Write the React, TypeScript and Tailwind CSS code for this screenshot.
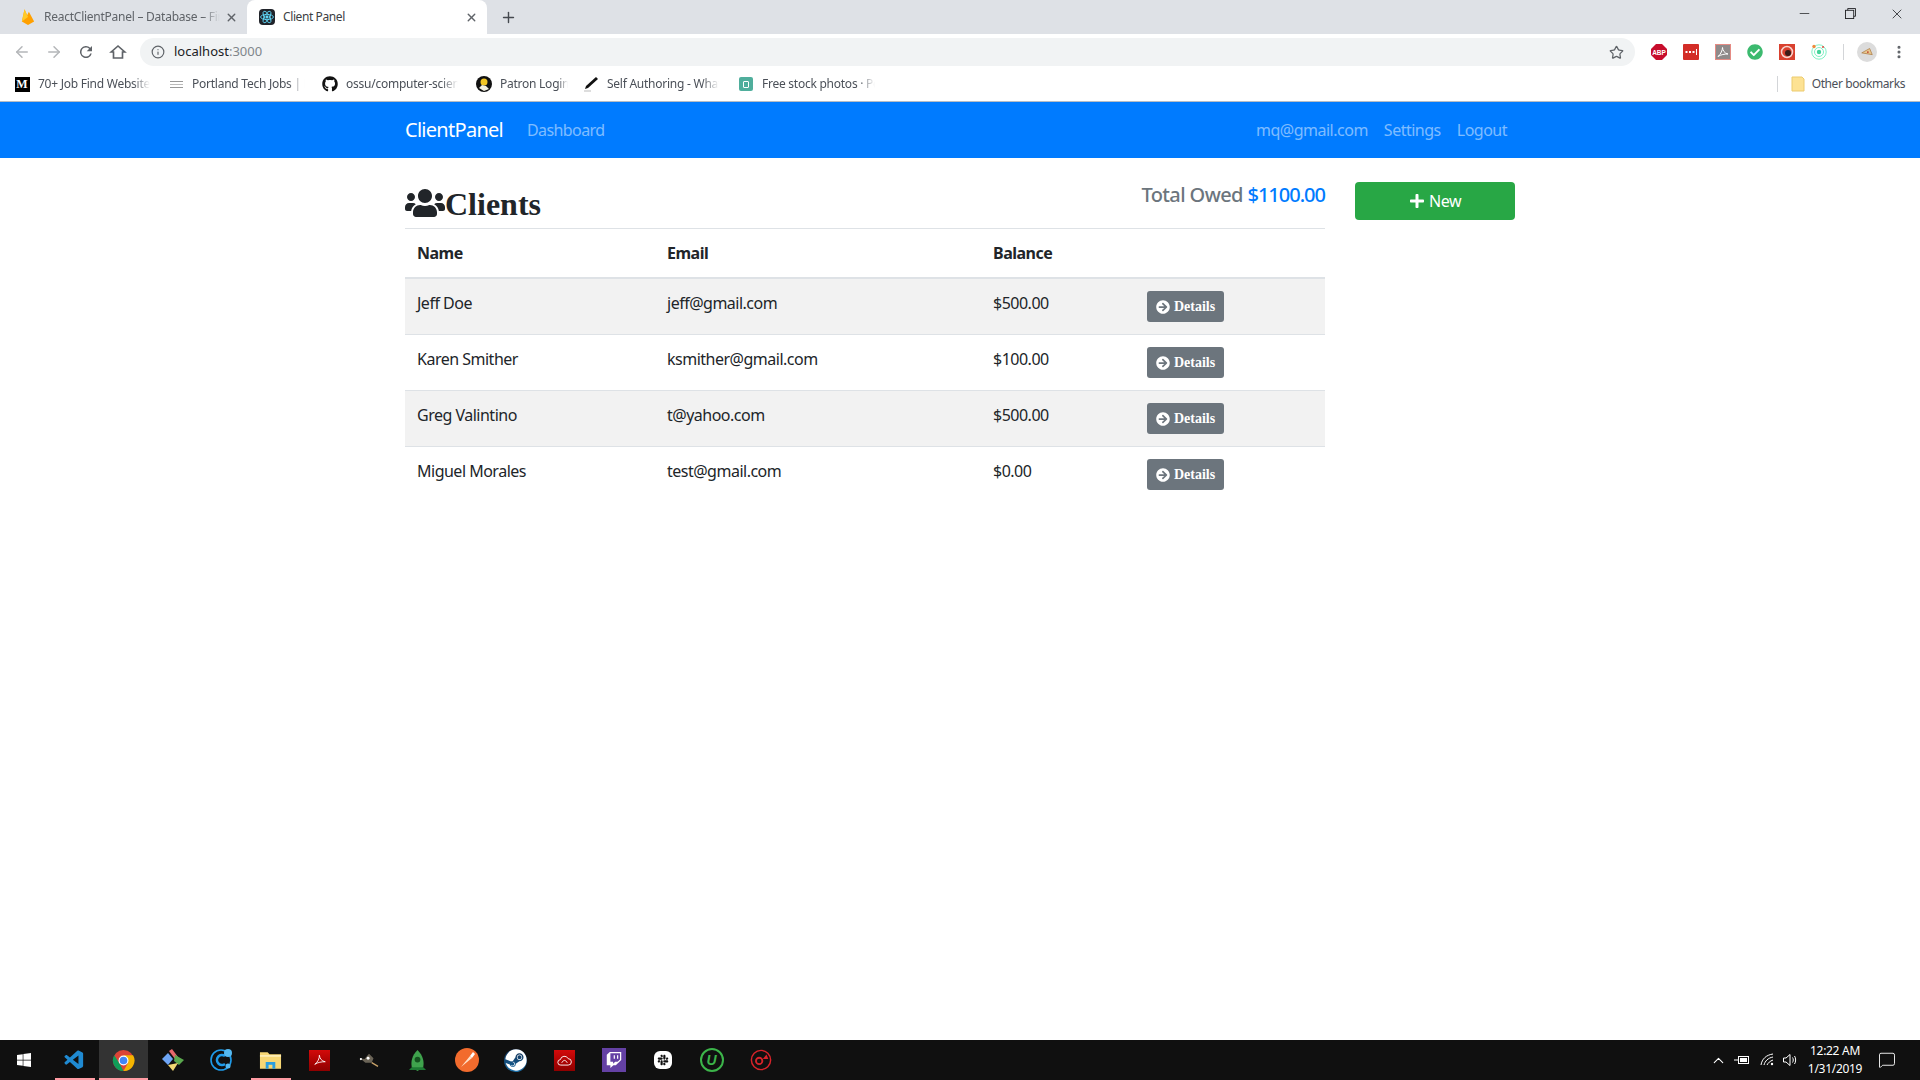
import { ArrowLeft, ArrowRight, Info, Star, X, Plus, Minus, MoreVertical, ChevronUp, MessageSquare } from 'lucide-react';
import { FaUsers, FaPlus, FaArrowCircleRight, FaGithub, FaWindows, FaSteam, FaTwitch, FaSlack, FaCheckCircle } from 'react-icons/fa';
import { VscVscode } from 'react-icons/vsc';

const clients = [
    { name: 'Jeff Doe', email: 'jeff@gmail.com', balance: '$500.00' },
    { name: 'Karen Smither', email: 'ksmither@gmail.com', balance: '$100.00' },
    { name: 'Greg Valintino', email: 't@yahoo.com', balance: '$500.00' },
    { name: 'Miguel Morales', email: 'test@gmail.com', balance: '$0.00' },
];

function Bookmark({ icon, label, width, margin }: { icon: React.ReactNode; label: string; width: string; margin: string }) {
    return (
        <div className={`flex items-center gap-[8px] ${margin}`}>
            <div className="w-4 h-4 flex items-center justify-center shrink-0">{icon}</div>
            <span className={`${width} overflow-hidden whitespace-nowrap text-[12px] tracking-[-0.25px] text-[#4b5058] [mask-image:linear-gradient(to_right,black_85%,transparent)]`}>
                {label}
            </span>
        </div>
    );
}

function ChromeBar() {
    return (
        <div className="font-['Noto_Sans',sans-serif] shrink-0">
            {/* tabs */}
            <div className="h-[34px] bg-[#dee1e6] flex items-end relative">
                <div className="w-[247px] h-[34px] flex items-center pl-[21px] pr-[9px]">
                    <svg viewBox="0 0 16 20" className="w-[14px] h-[18px] shrink-0">
                        <path d="M1 15 L4 1 L7 8 L9 4 L15 15 L8 19Z" fill="#ffa000" />
                        <path d="M1 15 L4 1 L8 10Z" fill="#ffca28" />
                    </svg>
                    <span className="ml-[9px] w-[176px] overflow-hidden whitespace-nowrap text-[12px] tracking-[-0.25px] text-[#5f6368] [mask-image:linear-gradient(to_right,black_90%,transparent)]">
                        ReactClientPanel – Database – Fir
                    </span>
                    <X size={13} strokeWidth={2.5} className="ml-auto text-[#5f6368]" />
                </div>
                <div className="w-[240px] h-[34px] bg-white rounded-t-lg flex items-center pl-[12px] pr-[9px]">
                    <div className="w-4 h-4 bg-[#20232a] rounded-sm flex items-center justify-center shrink-0">
                        <svg viewBox="0 0 24 24" className="w-[14px] h-[14px]" fill="none" stroke="#61dafb" strokeWidth="1.5">
                            <circle cx="12" cy="12" r="2" fill="#61dafb" />
                            <ellipse cx="12" cy="12" rx="11" ry="4.5" />
                            <ellipse cx="12" cy="12" rx="11" ry="4.5" transform="rotate(60 12 12)" />
                            <ellipse cx="12" cy="12" rx="11" ry="4.5" transform="rotate(120 12 12)" />
                        </svg>
                    </div>
                    <span className="ml-[8px] text-[12px] tracking-[-0.4px] text-[#3c4043]">Client Panel</span>
                    <X size={13} strokeWidth={2.5} className="ml-auto text-[#5f6368]" />
                </div>
                <Plus size={17} strokeWidth={2} className="ml-[13px] mb-[8px] text-[#45494f]" />
                <div className="ml-auto h-[34px] flex items-start pr-[15px] pt-[6px] gap-[33px] text-[#202124]">
                    <Minus size={15} strokeWidth={1.2} />
                    <svg viewBox="0 0 12 12" className="w-[11px] h-[11px] mt-[2px]" fill="none" stroke="currentColor" strokeWidth="1">
                        <rect x="0.5" y="2.5" width="9" height="9" />
                        <path d="M3 2.5V0.5H11.5V9H9.5" />
                    </svg>
                    <X size={16} strokeWidth={1.2} />
                </div>
            </div>
            {/* address bar */}
            <div className="h-[36px] bg-white flex items-center">
                <div className="flex items-center pl-[13px] w-[140px]">
                    <ArrowLeft size={18} strokeWidth={2} className="text-[#b4b6b9]" />
                    <ArrowRight size={18} strokeWidth={2} className="ml-[14px] text-[#b4b6b9]" />
                    <svg viewBox="0 0 24 24" className="ml-[14px] w-[18px] h-[18px] text-[#5f6368]" fill="currentColor">
                        <path d="M17.65 6.35A8 8 0 1 0 19.73 14h-2.08A6 6 0 1 1 12 6c1.66 0 3.14.69 4.22 1.78L13 11h7V4z" />
                    </svg>
                    <svg viewBox="0 0 24 24" className="ml-[14px] w-[18px] h-[18px] text-[#5f6368]" fill="none" stroke="currentColor" strokeWidth="2.2">
                        <path d="M12 4L3 12H6V20H18V12H21Z" strokeLinejoin="miter" />
                    </svg>
                </div>
                <div className="w-[1495px] h-[28px] bg-[#f1f3f4] rounded-full flex items-center pl-[11px] pr-[11px]">
                    <Info size={14} strokeWidth={2} className="text-[#5f6368]" />
                    <span className="ml-[9px] text-[13px] text-[#202124]">
                        localhost<span className="text-[#80868b]">:3000</span>
                    </span>
                    <Star size={15} strokeWidth={2} className="ml-auto text-[#5f6368]" />
                </div>
                <div className="flex items-center pl-[16px] gap-[16px]">
                    <svg viewBox="0 0 16 16" className="w-4 h-4">
                        <path d="M5 0H11L16 5V11L11 16H5L0 11V5Z" fill="#c70d2c" />
                        <text x="8" y="10.5" fontSize="6.5" fontWeight="700" fill="white" textAnchor="middle" fontFamily="Liberation Sans">ABP</text>
                    </svg>
                    <svg viewBox="0 0 16 16" className="w-4 h-4">
                        <rect width="16" height="16" rx="1" fill="#d32d27" />
                        <path d="M2.5 7h2v2h-2zM6 7h2v2H6zM9.5 7h2v2h-2z" fill="white" />
                        <rect x="13" y="5" width="1" height="6" fill="white" />
                    </svg>
                    <svg viewBox="0 0 16 16" className="w-4 h-4">
                        <rect x="0.5" y="0.5" width="15" height="15" fill="#8f8a8a" stroke="#e58b84" />
                        <path d="M3 12.5C6 10 7.5 6 7.5 3.5C7.5 6 9.5 9.5 13 10C9.5 10 6 10.5 3 12.5Z" fill="none" stroke="white" strokeWidth="1" />
                    </svg>
                    <FaCheckCircle size={16} className="text-[#3cba6f]" />
                    <svg viewBox="0 0 16 16" className="w-4 h-4">
                        <rect width="16" height="16" fill="#d9412f" />
                        <circle cx="8" cy="8" r="5.5" fill="none" stroke="#f6d5cf" strokeWidth="1.5" />
                        <circle cx="9" cy="9" r="3" fill="#3a1c18" />
                    </svg>
                    <svg viewBox="0 0 16 16" className="w-4 h-4" fill="none">
                        <circle cx="8" cy="8" r="7.2" stroke="#7ff0c4" strokeWidth="1" />
                        <circle cx="8" cy="8" r="4.5" stroke="#7ff0c4" strokeWidth="1" />
                        <circle cx="8" cy="8" r="2.2" fill="#43d39a" />
                        <circle cx="3" cy="2.5" r="1.7" fill="#f08a3c" />
                        <circle cx="12" cy="3" r="1" fill="#e2483d" />
                    </svg>
                    <div className="w-px h-[16px] bg-[#d3d5d8]" />
                    <div className="ml-[-3px] w-5 h-5 rounded-full bg-[#dcdcdc] flex items-center justify-center">
                        <svg viewBox="0 0 16 16" className="w-[14px] h-[14px]">
                            <path d="M2 9L11 4L14 11Z" fill="#e9c98f" stroke="#a8763e" strokeWidth="0.8" />
                            <circle cx="9" cy="8" r="1" fill="#c0392b" />
                        </svg>
                    </div>
                    <MoreVertical size={16} strokeWidth={2.6} className="ml-[-2px] text-[#5f6368]" />
                </div>
            </div>
            {/* bookmarks */}
            <div className="h-[32px] bg-white flex items-center pl-[14px] pb-[3px] border-b border-[#b6bcc4]">
                <Bookmark
                    width="w-[112px]"
                    margin=""
                    label="70+ Job Find Website"
                    icon={<div className="w-[15px] h-[15px] bg-black text-white text-[12px] leading-[15px] text-center font-bold font-['Liberation_Serif',serif]">M</div>}
                />
                <Bookmark
                    width="w-[113px]"
                    margin="ml-[18px]"
                    label="Portland Tech Jobs | P"
                    icon={<div className="w-[13px] flex flex-col gap-[2px]"><div className="h-px bg-[#999]" /><div className="h-px bg-[#bbb]" /><div className="h-px bg-[#999]" /></div>}
                />
                <Bookmark width="w-[112px]" margin="ml-[17px]" label="ossu/computer-scien" icon={<FaGithub size={16} className="text-[#111]" />} />
                <Bookmark
                    width="w-[68px]"
                    margin="ml-[18px]"
                    label="Patron Login"
                    icon={
                        <svg viewBox="0 0 16 16" className="w-4 h-4">
                            <circle cx="8" cy="8" r="8" fill="#111" />
                            <circle cx="8" cy="6" r="3.5" fill="#f3c623" />
                            <path d="M3 12l3-3 4 1 3 3-5 2z" fill="#f3f0e0" />
                        </svg>
                    }
                />
                <Bookmark
                    width="w-[112px]"
                    margin="ml-[15px]"
                    label="Self Authoring - What"
                    icon={
                        <svg viewBox="0 0 16 16" className="w-4 h-4">
                            <path d="M13 1L15 3L5 12L2 13L3 10Z" fill="#111" />
                            <path d="M1 15H8" stroke="#bbb" strokeWidth="1" />
                        </svg>
                    }
                />
                <Bookmark
                    width="w-[113px]"
                    margin="ml-[19px]"
                    label="Free stock photos · Pe"
                    icon={
                        <div className="w-[14px] h-[14px] bg-[#4fae9c] rounded-[2px] flex items-center justify-center">
                            <div className="w-[6px] h-[7px] border border-white rounded-[1px]" />
                        </div>
                    }
                />
                <div className="ml-auto flex items-center pr-[15px]">
                    <div className="w-px h-[16px] bg-[#d3d5d8] mr-[13px]" />
                    <svg viewBox="0 0 14 16" className="w-[14px] h-[16px] mr-[7px]">
                        <path d="M1 1H11L13 3V15H1Z" fill="#fde293" stroke="#eccb6f" />
                    </svg>
                    <span className="text-[12px] tracking-[-0.4px] text-[#4b5058]">Other bookmarks</span>
                </div>
            </div>
        </div>
    );
}

function Navbar() {
    return (
        <nav className="h-[56px] bg-[#007bff] shrink-0 font-['Noto_Sans',sans-serif]">
            <div className="w-[1110px] mx-auto h-full flex items-center">
                <span className="text-[20px] text-white mr-[16px] tracking-[-0.72px]">ClientPanel</span>
                <span className="px-2 text-[16px] text-white/50 tracking-[-0.6px]">Dashboard</span>
                <div className="ml-auto flex items-center text-[16px] text-white/50 tracking-[-0.5px]">
                    <span className="px-2">mq@gmail.com</span>
                    <span className="px-2">Settings</span>
                    <span className="px-2">Logout</span>
                </div>
            </div>
        </nav>
    );
}

function ClientsTable() {
    return (
        <table className="w-full table-fixed border-collapse text-[16px] text-[#212529] tracking-[-0.5px]">
            <colgroup>
                <col className="w-[250px]" />
                <col className="w-[326px]" />
                <col className="w-[154px]" />
                <col />
            </colgroup>
            <thead>
                <tr className="border-t border-[#dee2e6] border-b-2 border-b-[#dee2e6]">
                    <th className="p-3 h-[48px] text-left font-bold leading-6">Name</th>
                    <th className="p-3 text-left font-bold leading-6">Email</th>
                    <th className="p-3 text-left font-bold leading-6">Balance</th>
                    <th className="p-3" />
                </tr>
            </thead>
            <tbody>
                {clients.map((client, i) => (
                    <tr key={client.email} className={`border-b border-[#dee2e6] last:border-b-0 ${i % 2 === 0 ? 'bg-[#f2f2f2]' : ''}`}>
                        <td className="p-3 align-top leading-6">{client.name}</td>
                        <td className="p-3 align-top leading-6">{client.email}</td>
                        <td className="p-3 align-top leading-6">{client.balance}</td>
                        <td className="p-3 align-top">
                            <button className="h-[31px] w-[77px] bg-[#6c757d] rounded-[3px] text-white text-[14px] tracking-normal font-bold font-['Liberation_Serif',serif] flex items-center justify-center gap-[4px]">
                                <FaArrowCircleRight size={14} />
                                Details
                            </button>
                        </td>
                    </tr>
                ))}
            </tbody>
        </table>
    );
}

function Taskbar() {
    return (
        <div className="h-[40px] bg-[#101010] shrink-0 flex items-center text-white font-['Noto_Sans',sans-serif]">
            <div className="w-[50px] h-full flex items-center justify-center pr-[2px]">
                <FaWindows size={16} />
            </div>
            <TaskItem underline="w-[40px]">
                <VscVscode size={23} className="text-[#1f8ad2]" />
            </TaskItem>
            <TaskItem underline="w-full" active>
                <svg viewBox="0 0 24 24" className="w-[23px] h-[23px]">
                    <circle cx="12" cy="12" r="11" fill="#db4437" />
                    <path d="M12 23A11 11 0 0 1 2.4 6.5L8 15.5Z" fill="#0f9d58" />
                    <path d="M12 6.5H22A11 11 0 0 1 12 23L17 14Z" fill="#f4b400" />
                    <circle cx="12" cy="12" r="5.2" fill="white" />
                    <circle cx="12" cy="12" r="4" fill="#4285f4" />
                </svg>
            </TaskItem>
            <TaskItem>
                <svg viewBox="0 0 24 24" className="w-[24px] h-[24px]">
                    <path d="M1 11L7 5L12 11L7 17Z" fill="#6ea5f5" />
                    <path d="M8 3L11 1L17 9L14 11Z" fill="#e8676c" />
                    <path d="M14 7L23 12L18 17L13 13Z" fill="#5aa84e" />
                    <path d="M7 17L17 15L12 23Z" fill="#f2d873" />
                </svg>
            </TaskItem>
            <TaskItem>
                <svg viewBox="0 0 24 24" className="w-[24px] h-[24px]" fill="none">
                    <circle cx="11" cy="12" r="10" stroke="#1e9bea" strokeWidth="1.6" />
                    <path d="M15 8A5 5 0 1 0 15 16" stroke="#1e9bea" strokeWidth="2.6" />
                    <circle cx="18" cy="5" r="4" fill="#54b8f0" />
                    <circle cx="18" cy="18" r="2.5" fill="#54b8f0" />
                </svg>
            </TaskItem>
            <TaskItem underline="w-[40px]">
                <svg viewBox="0 0 24 20" className="w-[23px] h-[20px]">
                    <path d="M1 2H9L11 4H23V19H1Z" fill="#f7d774" />
                    <rect x="1" y="5" width="22" height="1.5" fill="#fff3c4" />
                    <path d="M7 19V12H17V19H14V15H10V19Z" fill="#2a9fe0" />
                </svg>
            </TaskItem>
            <TaskItem>
                <div className="w-[21px] h-[21px] bg-gradient-to-b from-[#d30a0a] to-[#8f0000] flex items-center justify-center">
                    <svg viewBox="0 0 16 16" className="w-[14px] h-[14px]" fill="none" stroke="white" strokeWidth="1">
                        <path d="M2 13C5.5 10.5 7.5 6 7.3 2.5C7.5 6 10 9.5 14 10C10 10 5.5 10.5 2 13Z" />
                    </svg>
                </div>
            </TaskItem>
            <TaskItem>
                <svg viewBox="0 0 24 20" className="w-[22px] h-[18px]">
                    <path d="M2 8L7 9L12 3L17 8L15 13H8Z" fill="#6b6457" />
                    <circle cx="11" cy="8" r="1.6" fill="white" />
                    <circle cx="3" cy="9" r="1.2" fill="white" />
                    <path d="M15 13L22 17" stroke="#c9a36a" strokeWidth="1.5" />
                </svg>
            </TaskItem>
            <TaskItem>
                <svg viewBox="0 0 24 24" className="w-[23px] h-[23px]">
                    <path d="M12 1C18 7 19 13 18 19L12 23L6 19C5 13 6 7 12 1Z" fill="#3fa34d" />
                    <circle cx="12" cy="11" r="3" fill="#14531f" />
                    <path d="M6 19L3 22H21L18 19Z" fill="#1e7a33" />
                </svg>
            </TaskItem>
            <TaskItem>
                <svg viewBox="0 0 24 24" className="w-[24px] h-[24px]">
                    <circle cx="12" cy="12" r="12" fill="#f26b2d" />
                    <path d="M6 19L15 8L17 10Z" fill="#ffe1c9" />
                    <path d="M15 8L18 4L20 6L17 10Z" fill="white" />
                </svg>
            </TaskItem>
            <TaskItem>
                <div className="w-[23px] h-[23px] rounded-full bg-gradient-to-b from-[#0d2a4d] to-[#1a6fa8] flex items-center justify-center">
                    <FaSteam size={22} className="text-white" />
                </div>
            </TaskItem>
            <TaskItem>
                <div className="w-[21px] h-[21px] bg-gradient-to-b from-[#d30a0a] to-[#8f0000] flex items-center justify-center">
                    <svg viewBox="0 0 16 12" className="w-[15px] h-[11px]" fill="none" stroke="white" strokeWidth="1">
                        <path d="M4 11A3 3 0 0 1 3.5 5A4.5 4.5 0 0 1 12 4A3.5 3.5 0 0 1 12 11Z" />
                        <path d="M5 8.5C7 5 9 5 11 8.5" />
                    </svg>
                </div>
            </TaskItem>
            <TaskItem>
                <div className="w-[24px] h-[24px] bg-[#6441a4] flex items-center justify-center">
                    <FaTwitch size={16} className="text-white" />
                </div>
            </TaskItem>
            <TaskItem>
                <div className="w-[18px] h-[18px] bg-white rounded-[6px] flex items-center justify-center">
                    <FaSlack size={12} className="text-[#111]" />
                </div>
            </TaskItem>
            <TaskItem>
                <div className="w-[24px] h-[24px] rounded-full border-2 border-[#3cb44a] flex items-center justify-center text-[14px] italic font-bold text-[#3cb44a] font-['Liberation_Sans',sans-serif]">U</div>
            </TaskItem>
            <TaskItem>
                <svg viewBox="0 0 24 24" className="w-[22px] h-[22px]" fill="none">
                    <circle cx="12" cy="12" r="10.5" stroke="#d8232a" strokeWidth="1.6" />
                    <circle cx="10" cy="13" r="3.5" stroke="#d8232a" strokeWidth="2" />
                    <path d="M14 11L18 6L20 11Z" fill="#d8232a" />
                </svg>
            </TaskItem>
            <div className="ml-auto flex items-center h-full">
                <ChevronUp size={17} strokeWidth={1.5} className="mr-[7px]" />
                <svg viewBox="0 0 16 10" className="w-[16px] h-[10px] mr-[10px]" fill="none" stroke="white" strokeWidth="1">
                    <rect x="4.5" y="1.5" width="10" height="7" />
                    <rect x="6" y="3" width="7" height="4" fill="white" stroke="none" />
                    <path d="M0 5H4" />
                </svg>
                <svg viewBox="0 0 16 16" className="w-[16px] h-[16px] mr-[6px]" fill="none" stroke="white" strokeWidth="1">
                    <path d="M1 13C2 7 6 3 13 2" />
                    <path d="M4 13C5 9 8 6 13 5" />
                    <path d="M7 13C8 11 10 9 13 8" />
                    <circle cx="12" cy="12" r="1.2" fill="white" stroke="none" />
                </svg>
                <svg viewBox="0 0 16 16" className="w-[16px] h-[16px] mr-[7px]" fill="none" stroke="white" strokeWidth="1">
                    <path d="M1.5 6H4L8 2.5V13.5L4 10H1.5Z" />
                    <path d="M10.5 5.5C11.5 7 11.5 9 10.5 10.5" />
                    <path d="M12.5 4C14 6 14 10 12.5 12" />
                </svg>
                <div className="w-[60px] flex flex-col items-center text-[12px] leading-[18px] tracking-[-0.3px]">
                    <span>12:22 AM</span>
                    <span>1/31/2019</span>
                </div>
                <MessageSquare size={18} strokeWidth={1.2} className="ml-[13px] mr-[24px]" />
            </div>
        </div>
    );
}

function TaskItem({ children, underline, active }: { children: React.ReactNode; underline?: string; active?: boolean }) {
    return (
        <div className={`relative w-[49px] h-full flex items-center justify-center ${active ? 'bg-[#333333]' : ''}`}>
            {children}
            {underline && <div className={`absolute bottom-0 h-[2px] bg-[#ff9ba3] ${underline}`} />}
        </div>
    );
}

export default function App() {
    return (
        <div className="h-screen flex flex-col bg-white overflow-hidden">
            <ChromeBar />
            <Navbar />
            <main className="flex-1 font-['Noto_Sans',sans-serif] pt-6">
                <div className="w-[1110px] mx-auto flex gap-[30px]">
                    <div className="w-[920px]">
                        <div className="flex justify-between items-start mb-2 h-[38px]">
                            <h2 className="text-[32px] leading-[38px] pt-[3px] font-bold text-[#212529] font-['Liberation_Serif',serif] flex items-center">
                                <FaUsers size={40} className="mt-[-3px]" />
                                Clients
                            </h2>
                            <h5 className="text-[20px] leading-6 pt-[1px] text-[#6c757d] font-medium tracking-[-0.6px]">
                                Total Owed <span className="text-[#007bff] tracking-[-1px]">$1100.00</span>
                            </h5>
                        </div>
                        <ClientsTable />
                    </div>
                    <button className="w-[160px] h-[38px] bg-[#28a745] rounded text-white text-[16px] tracking-[-0.5px] flex items-center justify-center gap-[4px]">
                        <FaPlus size={16} />
                        New
                    </button>
                </div>
            </main>
            <Taskbar />
        </div>
    );
}
